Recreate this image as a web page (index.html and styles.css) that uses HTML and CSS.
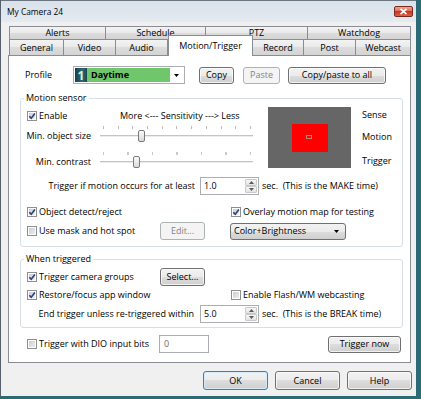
FILE: index.html
```html
<!DOCTYPE html>
<html>
<head>
<meta charset="utf-8">
<title>My Camera 24</title>
<link rel="stylesheet" href="styles.css">
</head>
<body>
<div class="win">
  <div class="titlebar">
    <span class="title">My Camera 24</span>
    <div class="close"><svg width="9" height="7" viewBox="0 0 9 7"><path d="M1.5 0.8 L7.5 6.2 M7.5 0.8 L1.5 6.2" stroke="#fff" stroke-width="1.7" fill="none"/></svg></div>
  </div>
  <div class="client">
    <div class="tabs">
      <div class="tabrow back">
        <div class="tab t-alerts">Alerts</div>
        <div class="tab t-schedule">Schedule</div>
        <div class="tab t-ptz">PTZ</div>
        <div class="tab t-watchdog">Watchdog</div>
      </div>
      <div class="tabrow front">
        <div class="tab t-general">General</div>
        <div class="tab t-video">Video</div>
        <div class="tab t-audio">Audio</div>
        <div class="tab sel t-motion">Motion/Trigger</div>
        <div class="tab t-record">Record</div>
        <div class="tab t-post">Post</div>
        <div class="tab t-webcast">Webcast</div>
      </div>
    </div>
    <div class="page">
      <div class="row profile-row">
        <span class="profile-label">Profile</span>
        <div class="profile-combo">
          <span class="pico">1</span>
          <span class="pname">Daytime</span>
          <span class="parrow"><svg width="5" height="3" viewBox="0 0 5 3"><path d="M0 0 H5 L2.5 3 Z" fill="#000"/></svg></span>
        </div>
        <div class="btn b-copy">Copy</div>
        <div class="btn dis b-paste">Paste</div>
        <div class="btn b-all">Copy/paste to all</div>
      </div>

      <fieldset class="group g-motion">
        <legend>Motion sensor</legend>
        <div class="sens-top">
          <div class="sens-left">
            <div class="row r-enable">
              <label class="chk w-enable"><span class="cb"><svg width="8" height="8" viewBox="0 0 8 8"><path d="M1.3 4.2 L3.2 6.3 L6.9 1.4" stroke="#2b4281" stroke-width="1.6" fill="none"/></svg></span>Enable</label>
              <span>More &lt;--- Sensitivity ---&gt; Less</span>
            </div>
            <div class="row sl-row sl1">
              <span class="sl-label">Min. object size</span>
              <div class="slider">
                <div class="ticks t1"></div>
                <div class="track"></div>
                <div class="thumb th1"></div>
              </div>
            </div>
            <div class="row sl-row sl2">
              <span class="sl-label">Min. contrast</span>
              <div class="slider">
                <div class="ticks t2"></div>
                <div class="track"></div>
                <div class="thumb th2"></div>
              </div>
            </div>
          </div>
          <div class="preview">
            <div class="motion-rect"><div class="hot"></div></div>
          </div>
          <div class="sens-labels">
            <span class="lab-sense">Sense</span>
            <span class="lab-motion">Motion</span>
            <span class="lab-trigger">Trigger</span>
          </div>
        </div>
        <div class="row r-make">
          <span class="rlabel w-make">Trigger if motion occurs for at least</span>
          <div class="num"><span class="val">1.0</span><span class="spin"><span><svg width="5" height="3" viewBox="0 0 5 3"><path d="M0 3 H5 L2.5 0 Z" fill="#5a5a5a"/></svg></span><span><svg width="5" height="3" viewBox="0 0 5 3"><path d="M0 0 H5 L2.5 3 Z" fill="#5a5a5a"/></svg></span></span></div>
          <span class="sec">sec.&nbsp; (This is the MAKE time)</span>
        </div>
        <div class="row r-obj">
          <label class="chk w-left1"><span class="cb"><svg width="8" height="8" viewBox="0 0 8 8"><path d="M1.3 4.2 L3.2 6.3 L6.9 1.4" stroke="#2b4281" stroke-width="1.6" fill="none"/></svg></span>Object detect/reject</label>
          <label class="chk"><span class="cb"><svg width="8" height="8" viewBox="0 0 8 8"><path d="M1.3 4.2 L3.2 6.3 L6.9 1.4" stroke="#2b4281" stroke-width="1.6" fill="none"/></svg></span>Overlay motion map for testing</label>
        </div>
        <div class="row r-mask">
          <label class="chk w-left2"><span class="cb"></span>Use mask and hot spot</label>
          <div class="btn dis b-small">Edit...</div>
          <div class="combo">
            <span>Color+Brightness</span>
            <svg width="5" height="3" viewBox="0 0 5 3"><path d="M0 0 H5 L2.5 3 Z" fill="#000"/></svg>
          </div>
        </div>
      </fieldset>

      <fieldset class="group g-trig">
        <legend>When triggered</legend>
        <div class="row r-groups">
          <label class="chk w-left2"><span class="cb"><svg width="8" height="8" viewBox="0 0 8 8"><path d="M1.3 4.2 L3.2 6.3 L6.9 1.4" stroke="#2b4281" stroke-width="1.6" fill="none"/></svg></span>Trigger camera groups</label>
          <div class="btn b-small">Select...</div>
        </div>
        <div class="row r-restore">
          <label class="chk w-left1"><span class="cb"><svg width="8" height="8" viewBox="0 0 8 8"><path d="M1.3 4.2 L3.2 6.3 L6.9 1.4" stroke="#2b4281" stroke-width="1.6" fill="none"/></svg></span>Restore/focus app window</label>
          <label class="chk"><span class="cb"></span>Enable Flash/WM webcasting</label>
        </div>
        <div class="row r-break">
          <span class="rlabel w-break">End trigger unless re-triggered within</span>
          <div class="num"><span class="val">5.0</span><span class="spin"><span><svg width="5" height="3" viewBox="0 0 5 3"><path d="M0 3 H5 L2.5 0 Z" fill="#5a5a5a"/></svg></span><span><svg width="5" height="3" viewBox="0 0 5 3"><path d="M0 0 H5 L2.5 3 Z" fill="#5a5a5a"/></svg></span></span></div>
          <span class="sec">sec.&nbsp; (This is the BREAK time)</span>
        </div>
      </fieldset>

      <div class="row r-dio">
        <label class="chk w-dio"><span class="cb"></span>Trigger with DIO input bits</label>
        <div class="txt">0</div>
        <div class="btn b-now">Trigger now</div>
      </div>
    </div>
    <div class="footer">
      <div class="btn fbtn def">OK</div>
      <div class="btn fbtn">Cancel</div>
      <div class="btn fbtn">Help</div>
    </div>
  </div>
</div>
</body>
</html>
```

FILE: styles.css
```css
* { box-sizing: border-box; }
html, body { margin: 0; padding: 0; }
body {
  font-family: "Open Sans", "Noto Sans", sans-serif;
  font-size: 9px;
  line-height: 12px;
  color: #000;
  background: #fff;
}
.win {
  width: 421px;
  height: 399px;
  background: #f0f0f0;
  border-left: 1px solid #56606a;
  border-right: 5px solid #2c6a76;
  border-bottom: 3px solid #2c6a76;
  overflow: hidden;
}
.titlebar {
  height: 22px;
  display: flex;
  align-items: center;
  padding-left: 6px;
  background: linear-gradient(#d9e1ea, #e4eaf0);
  border-top: 1px solid #6b7580;
}
.title { font-size: 8.4px; }
.close {
  margin-left: auto;
  margin-right: 3px;
  width: 19px;
  height: 11px;
  border: 1px solid #7b2a1d;
  border-radius: 2px;
  background: linear-gradient(#eaa697, #d86a55 50%, #c5391f 50%, #d8604a);
  display: flex;
  align-items: center;
  justify-content: center;
}
.client { padding-left: 7px; }
.tabs { margin-top: 4px; padding-left: 1px; }
.tabrow { display: flex; align-items: flex-start; }
.tab {
  border: 1px solid #898c95;
  border-bottom: none;
  margin-left: -1px;
  background: linear-gradient(#f3f3f3, #e9e9e9 50%, #dcdcdc 50%, #d4d4d4);
  text-align: center;
}
.tab:first-child { margin-left: 0; }
.back .tab { height: 13px; line-height: 12px; }
.front .tab { height: 16px; line-height: 15px; }
.tab.sel {
  background: #fff;
  height: 21px;
  line-height: 20px;
  margin-top: -4px;
  margin-bottom: -1px;
  margin-left: 0;
  position: relative;
  z-index: 2;
}
.t-alerts { width: 97px; }
.t-schedule { width: 101px; }
.t-ptz { width: 103px; }
.t-watchdog { width: 104px; }
.t-general { width: 55px; }
.t-video { width: 53px; }
.t-audio { width: 53px; }
.t-motion { width: 85px; }
.t-record { width: 52px; }
.t-post { width: 53px; }
.t-webcast { width: 56px; }

.page {
  width: 403px;
  height: 308px;
  border: 1px solid #898c95;
  background: #fff;
}
.row { display: flex; align-items: center; }

/* profile */
.profile-row { margin-top: 10px; margin-left: 16px; height: 18px; }
.profile-label { width: 48px; }
.profile-combo {
  width: 112px;
  height: 18px;
  border: 1px solid #abadb3;
  display: flex;
  align-items: stretch;
  background: #fff;
  padding: 1px;
}
.pico {
  width: 12px;
  background: linear-gradient(90deg, #163e4c, #2f6b78 60%, #1a4655);
  color: #d8f0d0;
  font-weight: bold;
  font-size: 12px;
  line-height: 15px;
  text-align: center;
}
.pname {
  flex: 1;
  background: #6fc66b;
  font-weight: bold;
  padding-left: 4px;
  line-height: 14px;
}
.parrow { width: 13px; display: flex; align-items: center; justify-content: center; }

.btn {
  border: 1px solid #707070;
  border-radius: 3px;
  background: linear-gradient(#f2f2f2, #ebebeb 50%, #dddddd 50%, #cfcfcf);
  box-shadow: inset 0 0 0 1px rgba(255,255,255,0.7);
  text-align: center;
  display: flex;
  align-items: center;
  justify-content: center;
  flex: none;
}
.btn.dis {
  border-color: #adb2b5;
  background: #f4f4f4;
  box-shadow: none;
  color: #838383;
}
.b-copy { margin-left: 14px; width: 35px; height: 17px; }
.b-paste { margin-left: 9px; width: 37px; height: 17px; }
.b-all { margin-left: 8px; width: 98px; height: 17px; }

/* groups */
.group {
  margin: 0 0 0 11px;
  padding: 0;
  width: 383px;
  border: 1px solid #d5dfe5;
  border-radius: 3px;
  min-width: 0;
}
.group legend {
  padding: 0 2px;
  margin-left: 3px;
  line-height: 12px;
}
.g-motion { margin-top: 8px; padding-bottom: 6px; }
.g-trig { margin-top: 6px; padding-bottom: 4px; }

.sens-top { display: flex; align-items: flex-start; }
.sens-left { width: 239px; }
.r-enable { margin-top: 6px; height: 12px; }
.chk { display: flex; align-items: center; flex: none; }
.cb {
  width: 10px;
  height: 10px;
  border: 1px solid #8e8f8f;
  background: linear-gradient(135deg, #c3c7cc, #f3f3f4);
  box-shadow: inset 0 0 0 1px #fff;
  margin-right: 2px;
  display: flex;
  align-items: center;
  justify-content: center;
  flex: none;
}
.w-enable { margin-left: 6px; width: 93px; }
.sl-row { height: 18px; align-items: flex-start; }
.sl1 { margin-top: 3px; }
.sl2 { margin-top: 8px; }
.sl-label { width: 70px; text-align: right; padding-top: 4px; line-height: 14px; }
.slider { margin-left: 9px; width: 153px; height: 18px; position: relative; }
.ticks { margin-left: 3px; height: 3px; margin-top: 1px; }
.t1 { width: 148px; background: repeating-linear-gradient(90deg, #b9b9b9 0 1px, transparent 1px 14.7px); }
.t2 { width: 148px; background: repeating-linear-gradient(90deg, #c9c9c9 0 1px, transparent 1px 24.5px); }
.track { margin-top: 6px; height: 2px; border-top: 1px solid #c4c4c4; background: #ececec; }
.thumb {
  position: absolute;
  top: 5px;
  width: 7px;
  height: 12px;
  border: 1px solid #7a7a7a;
  border-radius: 2px;
  background: linear-gradient(#fafafa, #dadada);
}
.th1 { left: 38px; }
.th2 { left: 33px; }
.preview {
  margin-left: 8px;
  margin-top: 3px;
  width: 83px;
  height: 61px;
  background: #666;
  padding: 17px 0 0 24px;
}
.motion-rect {
  width: 36px;
  height: 28px;
  background: #ff0000;
  padding: 11px 0 0 14px;
}
.hot { width: 6px; height: 4px; border: 1px solid #c88282; }
.sens-labels { margin-left: 11px; display: flex; flex-direction: column; }
.lab-sense { margin-top: 5px; }
.lab-motion { margin-top: 10px; }
.lab-trigger { margin-top: 12px; }

.r-make { margin-top: 8px; height: 18px; }
.rlabel { text-align: right; flex: none; }
.w-make { width: 174px; margin-right: 5px; }
.w-break { width: 173px; margin-right: 6px; }
.num {
  width: 59px;
  height: 18px;
  border: 1px solid #abadb3;
  display: flex;
  background: #fff;
  flex: none;
}
.num .val { flex: 1; padding-left: 3px; line-height: 16px; }
.spin { width: 13px; display: flex; flex-direction: column; padding: 1px 1px 1px 0; }
.spin span {
  flex: 1;
  border: 1px solid #c9c9c9;
  border-radius: 1px;
  background: linear-gradient(#f7f7f7, #e3e3e3);
  display: flex;
  align-items: center;
  justify-content: center;
}
.sec { margin-left: 3px; }

.r-obj { margin-top: 10px; height: 14px; }
.w-left1 { margin-left: 6px; width: 204px; }
.r-mask { margin-top: 3px; height: 18px; }
.w-left2 { margin-left: 6px; width: 133px; }
.b-small { width: 45px; height: 18px; }
.combo {
  margin-left: 25px;
  width: 116px;
  height: 17px;
  border: 1px solid #707070;
  border-radius: 3px;
  background: linear-gradient(#f2f2f2, #ebebeb 50%, #dddddd 50%, #cfcfcf);
  display: flex;
  align-items: center;
  justify-content: space-between;
  padding: 0 6px 0 3px;
}

.r-groups { margin-top: 3px; height: 18px; }
.r-restore { margin-top: 2px; height: 14px; }
.r-break { margin-top: 3px; height: 18px; }

.r-dio { margin-top: 7px; height: 18px; margin-left: 18px; }
.w-dio { width: 132px; }
.txt {
  width: 50px;
  height: 18px;
  border: 1px solid #abadb3;
  padding-left: 4px;
  line-height: 16px;
  color: #6d6d6d;
}
.b-now { margin-left: auto; margin-right: 9px; width: 73px; height: 17px; }

.footer { display: flex; gap: 7px; margin-top: 8px; padding-left: 195px; }
.fbtn { width: 65px; height: 19px; }
.fbtn.def { border-color: #3c7fb1; box-shadow: inset 0 0 0 1px #d6ebf8; }
```
